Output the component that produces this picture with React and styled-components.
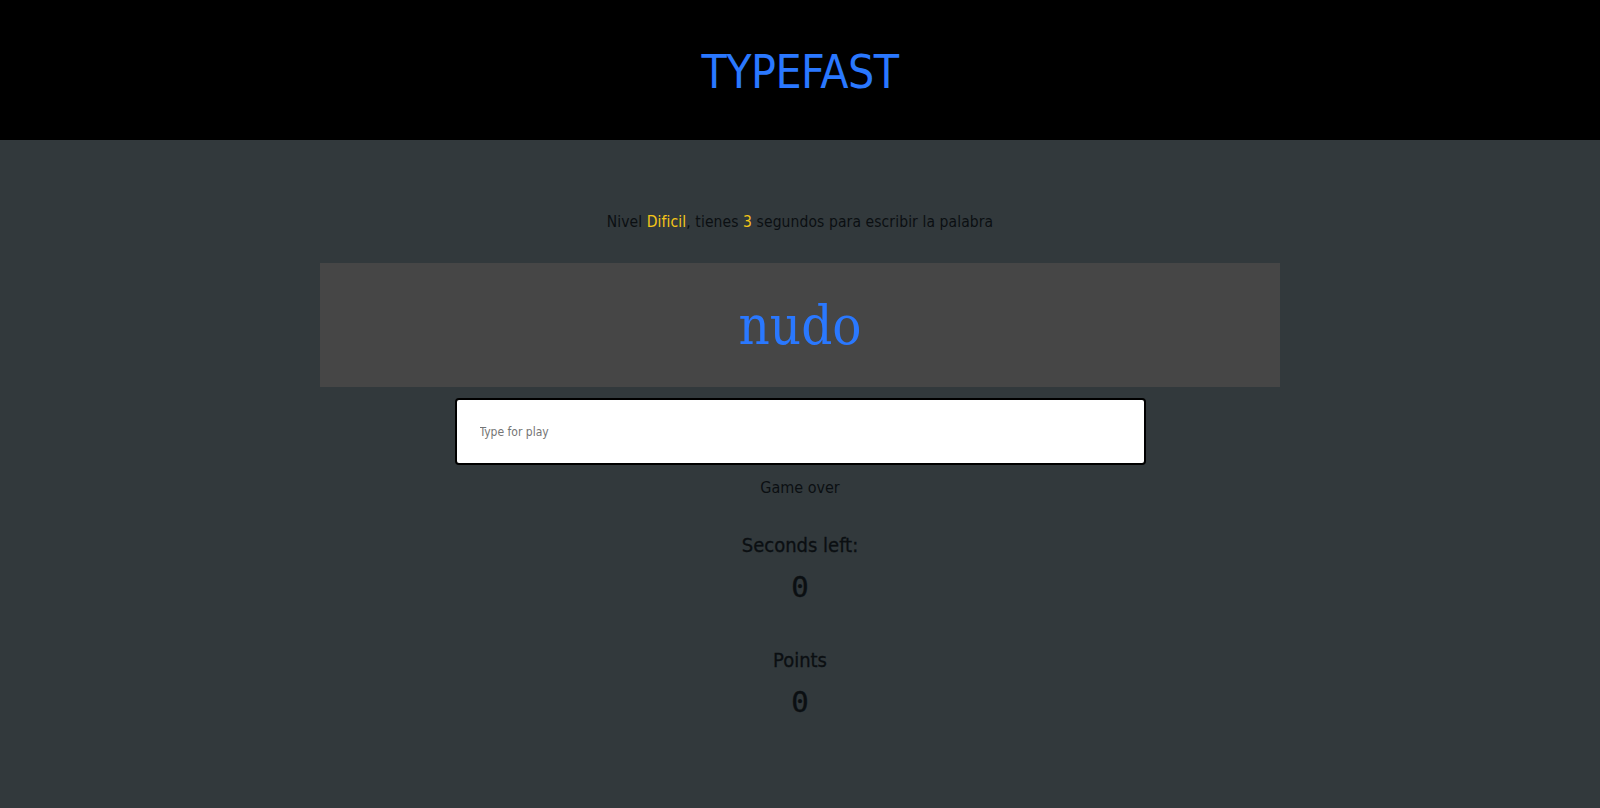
import React, { useState } from 'react'
import styled, { createGlobalStyle } from 'styled-components'

const GlobalStyle = createGlobalStyle`
  html, body {
    margin: 0;
    padding: 0;
    background-color: #32393c;
  }
  * { box-sizing: border-box; }
`;

const Header = styled.header`
  height: 140px;
  padding-top: 4px;
  background-color: #000;
  display: flex;
  align-items: center;
  justify-content: center;
  h1 {
    margin: 0;
    color: #2a78ff;
    font-family: "DejaVu Sans Condensed", "DejaVu Sans", sans-serif;
    font-stretch: condensed;
    font-weight: 400;
    font-size: 46px;
    letter-spacing: -0.5px;
  }
`;

const Main = styled.main`
  display: flex;
  flex-direction: column;
  align-items: center;
  padding: 72px 0 60px;
  font-family: "Liberation Sans Narrow", "DejaVu Sans Condensed", sans-serif;
  color: #0b0f12;
`;

const Intro = styled.p`
  margin: 0;
  font-size: 15.5px;
  line-height: 20px;
  letter-spacing: 0.1px;
  span {
    color: #f5c518;
  }
`;

const WordBox = styled.div`
  margin-top: 31px;
  width: 960px;
  height: 124px;
  background-color: #464646;
  display: flex;
  align-items: center;
  justify-content: center;
  h2 {
    margin: 0;
    color: #2a78ff;
    font-family: "DejaVu Serif Condensed", "DejaVu Serif", serif;
    font-stretch: condensed;
    font-weight: 400;
    font-size: 54px;
  }
`;

const Input = styled.input`
  margin-top: 11px;
  width: 691px;
  height: 67px;
  border: 2px solid #000;
  border-radius: 4px;
  background: #fff;
  padding: 0 23px;
  font-family: "DejaVu Sans Condensed", sans-serif;
  font-size: 12px;
  outline: none;
  &::placeholder {
    color: #757575;
  }
`;

const Status = styled.p`
  margin: 12px 0 0;
  font-size: 16px;
  line-height: 22px;
`;

const Label = styled.h3`
  margin: ${(p) => p.$gap}px 0 0;
  font-size: 20px;
  line-height: 26px;
  font-weight: 500;
  -webkit-text-stroke: 0.3px #0b0f12;
`;

const Value = styled.div`
  margin-top: 12px;
  font-family: "DejaVu Sans Mono", monospace;
  font-size: 29px;
  line-height: 34px;
  -webkit-text-stroke: 0.4px #0b0f12;
`;

const App = () => {
  const [text, setText] = useState('');
  return (
    <>
      <GlobalStyle />
      <Header>
        <h1>TYPEFAST</h1>
      </Header>
      <Main>
        <Intro>
          Nivel <span>Dificil</span>, tienes <span>3</span> segundos para escribir la palabra
        </Intro>
        <WordBox>
          <h2>nudo</h2>
        </WordBox>
        <Input
          placeholder="Type for play"
          value={text}
          onChange={(e) => setText(e.target.value)}
        />
        <Status>Game over</Status>
        <Label $gap={33}>Seconds left:</Label>
        <Value>0</Value>
        <Label $gap={43}>Points</Label>
        <Value>0</Value>
      </Main>
    </>
  )
}

export default App
